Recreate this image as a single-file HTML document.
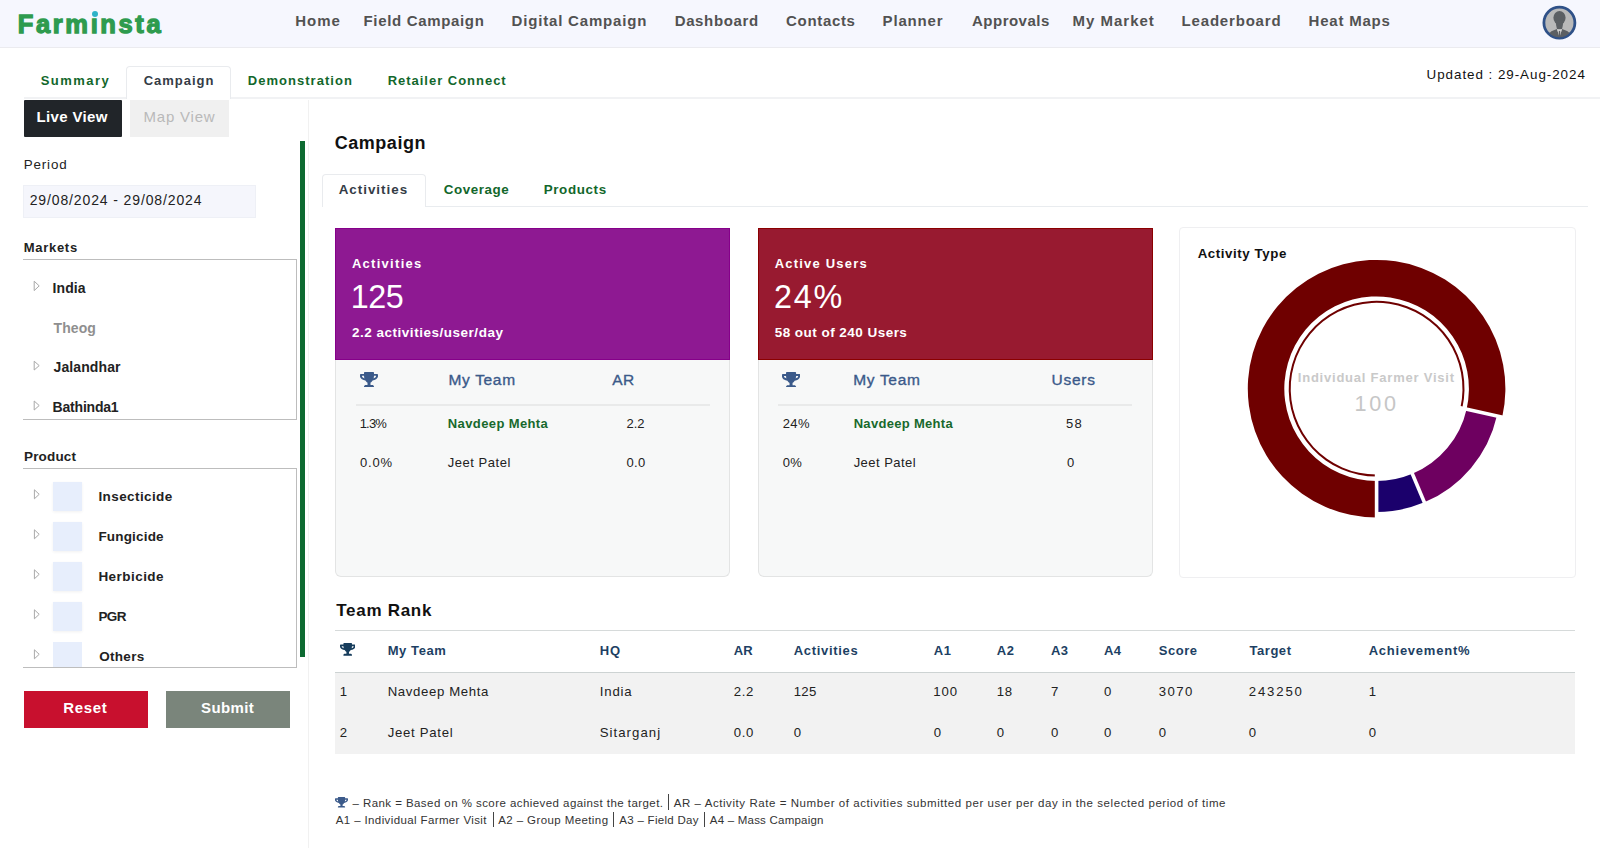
<!DOCTYPE html>
<html><head><meta charset="utf-8">
<style>
html,body{margin:0;padding:0;}
body{width:1600px;height:848px;overflow:hidden;position:relative;background:#fff;font-family:"Liberation Sans",sans-serif;}
.abs{position:absolute;display:block;}
.t{position:absolute;white-space:nowrap;line-height:1;}
.box{position:absolute;box-sizing:border-box;}
</style></head><body>
<!-- header -->
<div class="box" style="left:0;top:0;width:1600px;height:48px;background:#f6f7fe;border-bottom:1px solid #ebebef"></div>
<svg class="abs" style="left:1540px;top:4px" width="38" height="38" viewBox="0 0 38 38">
  <defs><clipPath id="av"><circle cx="19.4" cy="18.65" r="14.6"/></clipPath></defs>
  <circle cx="19.4" cy="18.65" r="15.5" fill="#b9b9b9" stroke="#2f5188" stroke-width="2.8"/>
  <g clip-path="url(#av)" fill="#5b5f63">
    <ellipse cx="19.5" cy="13.8" rx="6.1" ry="6.9"/>
    <path d="M15.6 16.5 Q16.2 22.8 17 24.9 L22 24.9 Q22.8 22.8 23.4 16.5 Z"/>
    <path d="M6.5 37 Q7.5 28 13.8 26.2 L17 24.9 L19.5 33.5 L22 24.9 L25.2 26.2 Q31.5 28 32.5 37 Z"/>
    <path d="M17 24.9 L19.5 26.4 L22 24.9 L19.5 33.5 Z" fill="#d4d4d4"/>
    <path d="M18.9 26.9 L20.1 26.9 L20.7 33.5 L18.3 33.5 Z"/>
  </g>
</svg>
<!-- tab row -->
<div class="box" style="left:24px;top:97px;width:1576px;height:2px;background:#f1f2f4"></div>
<div class="box" style="left:126px;top:66px;width:105px;height:33px;background:#fff;border:1px solid #e9ebee;border-bottom:none;border-radius:4px 4px 0 0"></div>
<!-- sidebar -->
<div class="box" style="left:308px;top:100px;width:1px;height:748px;background:#f1f1f1"></div>
<div class="box" style="left:24px;top:100px;width:98px;height:37px;background:#212529;border-radius:1px"></div>
<div class="box" style="left:130px;top:100px;width:99px;height:37px;background:#f0f0f0"></div>
<div class="box" style="left:300px;top:141px;width:5px;height:516px;background:#0d6a31"></div>
<div class="box" style="left:23px;top:185px;width:233px;height:33px;background:#f5f6fc;border:1px solid #eef0f6"></div>
<div class="box" style="left:23px;top:259px;width:274px;height:161px;border-top:1px solid #bdbdbd;border-right:1px solid #bdbdbd;border-bottom:1px solid #bdbdbd"></div>
<div class="box" style="left:23px;top:468px;width:274px;height:200px;border-top:1px solid #bdbdbd;border-right:1px solid #bdbdbd;border-bottom:1px solid #bdbdbd"></div>
<svg class="abs" style="left:0;top:0" width="300" height="700">
  <g fill="none" stroke="#a9a9a9" stroke-width="1">
    <path d="M34.2 281.2 L39.2 285.9 L34.2 290.6 Z"/>
    <path d="M34.2 361.2 L39.2 365.6 L34.2 370 Z"/>
    <path d="M34.2 401 L39.2 405.5 L34.2 410 Z"/>
    <path d="M34.4 489.8 L39.2 494.3 L34.4 498.8 Z"/>
    <path d="M34.4 529.8 L39.2 534.3 L34.4 538.8 Z"/>
    <path d="M34.4 569.8 L39.2 574.3 L34.4 578.8 Z"/>
    <path d="M34.4 609.8 L39.2 614.3 L34.4 618.8 Z"/>
    <path d="M34.4 649.8 L39.2 654.3 L34.4 658.8 Z"/>
  </g>
</svg>
<div class="box" style="left:53px;top:482px;width:29px;height:29px;background:#e7eefc;box-shadow:0 1px 3px rgba(0,0,0,.06)"></div>
<div class="box" style="left:53px;top:522px;width:29px;height:29px;background:#e7eefc;box-shadow:0 1px 3px rgba(0,0,0,.06)"></div>
<div class="box" style="left:53px;top:562px;width:29px;height:29px;background:#e7eefc;box-shadow:0 1px 3px rgba(0,0,0,.06)"></div>
<div class="box" style="left:53px;top:602px;width:29px;height:29px;background:#e7eefc;box-shadow:0 1px 3px rgba(0,0,0,.06)"></div>
<div class="box" style="left:53px;top:642px;width:29px;height:25px;background:#e7eefc;"></div>
<div class="box" style="left:24px;top:691px;width:124px;height:37px;background:#c8102e"></div>
<div class="box" style="left:166px;top:691px;width:124px;height:37px;background:#7a857b"></div>
<!-- main tabs -->
<div class="box" style="left:322px;top:206px;width:1266px;height:1px;background:#e9ecef"></div>
<div class="box" style="left:322px;top:174px;width:104px;height:33px;background:#fff;border:1px solid #e9ebee;border-bottom:none;border-radius:4px 4px 0 0"></div>
<!-- cards -->
<div class="box" style="left:335px;top:228px;width:395px;height:349px;background:#f7f8f8;border:1px solid #e3e4e4;border-top:none;border-radius:0 0 6px 6px"></div>
<div class="box" style="left:335px;top:228px;width:395px;height:132px;background:#8e1992;border:1px solid #86008a"></div>
<div class="box" style="left:356px;top:404px;width:354px;height:2px;background:#e9eaea"></div>
<div class="box" style="left:758px;top:228px;width:395px;height:349px;background:#f7f8f8;border:1px solid #e3e4e4;border-top:none;border-radius:0 0 6px 6px"></div>
<div class="box" style="left:758px;top:228px;width:395px;height:132px;background:#981a30;border:1px solid #8b0000"></div>
<div class="box" style="left:778px;top:404px;width:354px;height:2px;background:#e9eaea"></div>
<div class="box" style="left:1179px;top:227px;width:397px;height:351px;background:#fff;border:1px solid #efeff1;border-radius:4px"></div>
<svg class="abs" style="left:0;top:0" width="1600" height="848">
<path d="M1376.60,517.50 A128.8,128.8 0 1 1 1502.20,417.24 L1466.61,409.15 A92.3,92.3 0 1 0 1376.60,481.00 Z" fill="#6f0000"/>
<path d="M1496.84,416.02 A123.3,123.3 0 0 1 1424.38,502.37 L1412.37,473.79 A92.3,92.3 0 0 0 1466.61,409.15 Z" fill="#6e0060"/>
<path d="M1424.38,502.37 A123.3,123.3 0 0 1 1376.60,512.00 L1376.60,481.00 A92.3,92.3 0 0 0 1412.37,473.79 Z" fill="#1b006c"/>
<path d="M1376.60,476.60 A87.9,87.9 0 1 1 1462.32,408.17 L1460.37,407.73 A85.9,85.9 0 1 0 1376.60,474.60 Z" fill="#6f0000"/>
<line x1="1376.60" y1="468.70" x2="1376.60" y2="523.70" stroke="#fff" stroke-width="3.6"/><line x1="1454.61" y1="406.42" x2="1508.25" y2="418.61" stroke="#fff" stroke-width="3.6"/><line x1="1407.60" y1="462.45" x2="1428.91" y2="513.15" stroke="#fff" stroke-width="3.6"/>
</svg>
<!-- team rank -->
<div class="box" style="left:335px;top:630px;width:1240px;height:1px;background:#d6dada"></div>
<div class="box" style="left:335px;top:672px;width:1240px;height:82px;background:#f2f2f2;border-top:1px solid #cdd3d3"></div>
<svg class="abs" style="left:360px;top:372px" width="18.0" height="15.4" viewBox="0 0 576 512" preserveAspectRatio="none"><path d="M552 64H448V24c0-13.3-10.7-24-24-24H152c-13.3 0-24 10.7-24 24v40H24C10.7 64 0 74.7 0 88v56c0 35.7 22.5 72.4 61.9 100.7 31.5 22.7 69.8 37.1 110 41.7C203.3 338.5 240 360 240 360v72h-48c-35.3 0-64 20.7-64 56v12c0 6.6 5.4 12 12 12h296c6.6 0 12-5.4 12-12v-12c0-35.3-28.7-56-64-56h-48v-72s36.7-21.5 68.1-73.6c40.3-4.6 78.6-19 110-41.7 39.3-28.3 61.9-65 61.9-100.7V88c0-13.3-10.7-24-24-24zM99.3 192.8C74.9 175.2 64 155.6 64 144v-16h64.2c1 32.6 5.8 61.2 12.8 86.2-15.1-5.2-29.2-12.4-41.7-21.4zM512 144c0 16.1-17.7 36.1-35.3 48.8-12.5 9-26.7 16.2-41.8 21.4 7-25 11.8-53.6 12.8-86.2H512v16z" fill="#3b5a8a"/></svg>
<svg class="abs" style="left:782.3px;top:371.8px" width="18.1" height="15.6" viewBox="0 0 576 512" preserveAspectRatio="none"><path d="M552 64H448V24c0-13.3-10.7-24-24-24H152c-13.3 0-24 10.7-24 24v40H24C10.7 64 0 74.7 0 88v56c0 35.7 22.5 72.4 61.9 100.7 31.5 22.7 69.8 37.1 110 41.7C203.3 338.5 240 360 240 360v72h-48c-35.3 0-64 20.7-64 56v12c0 6.6 5.4 12 12 12h296c6.6 0 12-5.4 12-12v-12c0-35.3-28.7-56-64-56h-48v-72s36.7-21.5 68.1-73.6c40.3-4.6 78.6-19 110-41.7 39.3-28.3 61.9-65 61.9-100.7V88c0-13.3-10.7-24-24-24zM99.3 192.8C74.9 175.2 64 155.6 64 144v-16h64.2c1 32.6 5.8 61.2 12.8 86.2-15.1-5.2-29.2-12.4-41.7-21.4zM512 144c0 16.1-17.7 36.1-35.3 48.8-12.5 9-26.7 16.2-41.8 21.4 7-25 11.8-53.6 12.8-86.2H512v16z" fill="#3b5a8a"/></svg>
<svg class="abs" style="left:339.6px;top:643px" width="15.4" height="12.7" viewBox="0 0 576 512" preserveAspectRatio="none"><path d="M552 64H448V24c0-13.3-10.7-24-24-24H152c-13.3 0-24 10.7-24 24v40H24C10.7 64 0 74.7 0 88v56c0 35.7 22.5 72.4 61.9 100.7 31.5 22.7 69.8 37.1 110 41.7C203.3 338.5 240 360 240 360v72h-48c-35.3 0-64 20.7-64 56v12c0 6.6 5.4 12 12 12h296c6.6 0 12-5.4 12-12v-12c0-35.3-28.7-56-64-56h-48v-72s36.7-21.5 68.1-73.6c40.3-4.6 78.6-19 110-41.7 39.3-28.3 61.9-65 61.9-100.7V88c0-13.3-10.7-24-24-24zM99.3 192.8C74.9 175.2 64 155.6 64 144v-16h64.2c1 32.6 5.8 61.2 12.8 86.2-15.1-5.2-29.2-12.4-41.7-21.4zM512 144c0 16.1-17.7 36.1-35.3 48.8-12.5 9-26.7 16.2-41.8 21.4 7-25 11.8-53.6 12.8-86.2H512v16z" fill="#173d5c"/></svg>
<svg class="abs" style="left:335px;top:797px" width="13.0" height="10.6" viewBox="0 0 576 512" preserveAspectRatio="none"><path d="M552 64H448V24c0-13.3-10.7-24-24-24H152c-13.3 0-24 10.7-24 24v40H24C10.7 64 0 74.7 0 88v56c0 35.7 22.5 72.4 61.9 100.7 31.5 22.7 69.8 37.1 110 41.7C203.3 338.5 240 360 240 360v72h-48c-35.3 0-64 20.7-64 56v12c0 6.6 5.4 12 12 12h296c6.6 0 12-5.4 12-12v-12c0-35.3-28.7-56-64-56h-48v-72s36.7-21.5 68.1-73.6c40.3-4.6 78.6-19 110-41.7 39.3-28.3 61.9-65 61.9-100.7V88c0-13.3-10.7-24-24-24zM99.3 192.8C74.9 175.2 64 155.6 64 144v-16h64.2c1 32.6 5.8 61.2 12.8 86.2-15.1-5.2-29.2-12.4-41.7-21.4zM512 144c0 16.1-17.7 36.1-35.3 48.8-12.5 9-26.7 16.2-41.8 21.4 7-25 11.8-53.6 12.8-86.2H512v16z" fill="#3b5a8a"/></svg>
<!-- footer bars -->
<div class="box" style="left:668px;top:794px;width:1px;height:16px;background:#444"></div>
<div class="box" style="left:493px;top:812px;width:1px;height:15px;background:#444"></div>
<div class="box" style="left:613px;top:812px;width:1px;height:15px;background:#444"></div>
<div class="box" style="left:704px;top:812px;width:1px;height:15px;background:#444"></div>
<div id="t0" class="t" style="left:295.35px;top:12.90px;font-size:15px;font-weight:bold;color:#525252;letter-spacing:0.938px;">Home</div>
<div id="t1" class="t" style="left:363.50px;top:12.90px;font-size:15px;font-weight:bold;color:#525252;letter-spacing:0.666px;">Field Campaign</div>
<div id="t2" class="t" style="left:511.60px;top:12.90px;font-size:15px;font-weight:bold;color:#525252;letter-spacing:0.816px;">Digital Campaign</div>
<div id="t3" class="t" style="left:674.66px;top:12.90px;font-size:15px;font-weight:bold;color:#525252;letter-spacing:0.643px;">Dashboard</div>
<div id="t4" class="t" style="left:786.11px;top:12.90px;font-size:15px;font-weight:bold;color:#525252;letter-spacing:0.666px;">Contacts</div>
<div id="t5" class="t" style="left:882.60px;top:12.90px;font-size:15px;font-weight:bold;color:#525252;letter-spacing:0.838px;">Planner</div>
<div id="t6" class="t" style="left:972.02px;top:12.90px;font-size:15px;font-weight:bold;color:#525252;letter-spacing:0.485px;">Approvals</div>
<div id="t7" class="t" style="left:1072.60px;top:12.90px;font-size:15px;font-weight:bold;color:#525252;letter-spacing:0.980px;">My Market</div>
<div id="t8" class="t" style="left:1181.60px;top:12.90px;font-size:15px;font-weight:bold;color:#525252;letter-spacing:0.814px;">Leaderboard</div>
<div id="t9" class="t" style="left:1308.60px;top:12.90px;font-size:15px;font-weight:bold;color:#525252;letter-spacing:0.784px;">Heat Maps</div>
<div id="t10" class="t" style="left:17.85px;top:12.41px;font-size:25.5px;font-weight:bold;color:#2e9b4e;letter-spacing:2.609px;-webkit-text-stroke:1.3px #2e9b4e">Farmınsta</div>
<div id="t11" class="t" style="left:40.66px;top:74.40px;font-size:13px;font-weight:bold;color:#12672b;letter-spacing:1.458px;">Summary</div>
<div id="t12" class="t" style="left:143.66px;top:74.40px;font-size:13px;font-weight:bold;color:#343c46;letter-spacing:0.988px;">Campaign</div>
<div id="t13" class="t" style="left:247.85px;top:74.40px;font-size:13px;font-weight:bold;color:#12672b;letter-spacing:1.022px;">Demonstration</div>
<div id="t14" class="t" style="left:387.66px;top:74.40px;font-size:13px;font-weight:bold;color:#12672b;letter-spacing:0.983px;">Retailer Connect</div>
<div id="t15" class="t" style="left:1426.60px;top:67.66px;font-size:13.4px;font-weight:normal;color:#111;letter-spacing:0.952px;">Updated : 29-Aug-2024</div>
<div id="t16" class="t" style="left:36.60px;top:109.30px;font-size:15px;font-weight:bold;color:#fff;letter-spacing:0.326px;">Live View</div>
<div id="t17" class="t" style="left:143.60px;top:109.30px;font-size:15px;font-weight:normal;color:#b9b9b9;letter-spacing:0.772px;">Map View</div>
<div id="t18" class="t" style="left:23.66px;top:157.66px;font-size:13.4px;font-weight:normal;color:#222;letter-spacing:0.856px;">Period</div>
<div id="t19" class="t" style="left:29.66px;top:193.15px;font-size:14px;font-weight:normal;color:#222;letter-spacing:0.877px;">29/08/2024 - 29/08/2024</div>
<div id="t20" class="t" style="left:23.66px;top:241.40px;font-size:13px;font-weight:bold;color:#222;letter-spacing:0.727px;">Markets</div>
<div id="t21" class="t" style="left:52.60px;top:280.85px;font-size:14px;font-weight:bold;color:#222;letter-spacing:0.052px;">India</div>
<div id="t22" class="t" style="left:53.56px;top:320.75px;font-size:14px;font-weight:bold;color:#8f8f8f;letter-spacing:0.075px;">Theog</div>
<div id="t23" class="t" style="left:53.56px;top:360.35px;font-size:14px;font-weight:bold;color:#222;letter-spacing:0.105px;">Jalandhar</div>
<div id="t24" class="t" style="left:52.60px;top:399.85px;font-size:14px;font-weight:bold;color:#222;letter-spacing:-0.203px;">Bathinda1</div>
<div id="t25" class="t" style="left:24.02px;top:449.77px;font-size:13.5px;font-weight:bold;color:#222;letter-spacing:0.161px;">Product</div>
<div id="t26" class="t" style="left:98.40px;top:489.87px;font-size:13.5px;font-weight:bold;color:#222;letter-spacing:0.412px;">Insecticide</div>
<div id="t27" class="t" style="left:98.40px;top:529.87px;font-size:13.5px;font-weight:bold;color:#222;letter-spacing:0.181px;">Fungicide</div>
<div id="t28" class="t" style="left:98.40px;top:569.87px;font-size:13.5px;font-weight:bold;color:#222;letter-spacing:0.459px;">Herbicide</div>
<div id="t29" class="t" style="left:98.40px;top:609.87px;font-size:13.5px;font-weight:bold;color:#222;letter-spacing:-0.533px;">PGR</div>
<div id="t30" class="t" style="left:99.20px;top:649.87px;font-size:13.5px;font-weight:bold;color:#222;letter-spacing:0.309px;">Others</div>
<div id="t31" class="t" style="left:63.30px;top:700.22px;font-size:15px;font-weight:bold;color:#fff;letter-spacing:0.660px;">Reset</div>
<div id="t32" class="t" style="left:201.02px;top:700.22px;font-size:15px;font-weight:bold;color:#fff;letter-spacing:0.391px;">Submit</div>
<div id="t33" class="t" style="left:334.70px;top:134.36px;font-size:18px;font-weight:bold;color:#111;letter-spacing:0.541px;">Campaign</div>
<div id="t34" class="t" style="left:338.70px;top:182.66px;font-size:13.4px;font-weight:bold;color:#343c46;letter-spacing:0.984px;">Activities</div>
<div id="t35" class="t" style="left:443.66px;top:182.66px;font-size:13.4px;font-weight:bold;color:#12672b;letter-spacing:0.567px;">Coverage</div>
<div id="t36" class="t" style="left:543.70px;top:182.66px;font-size:13.4px;font-weight:bold;color:#12672b;letter-spacing:0.622px;">Products</div>
<div id="t37" class="t" style="left:351.90px;top:256.60px;font-size:13px;font-weight:bold;color:#fff;letter-spacing:1.287px;">Activities</div>
<div id="t38" class="t" style="left:350.70px;top:280.92px;font-size:32.3px;font-weight:normal;color:#fff;letter-spacing:-0.445px;">125</div>
<div id="t39" class="t" style="left:351.90px;top:325.57px;font-size:13.5px;font-weight:bold;color:#fff;letter-spacing:0.521px;">2.2 activities/user/day</div>
<div id="t40" class="t" style="left:448.40px;top:372.38px;font-size:15.5px;font-weight:normal;color:#3b5a8a;letter-spacing:0.684px;-webkit-text-stroke:0.35px #3b5a8a">My Team</div>
<div id="t41" class="t" style="left:612.20px;top:371.54px;font-size:15.5px;font-weight:normal;color:#3b5a8a;letter-spacing:0.453px;-webkit-text-stroke:0.35px #3b5a8a">AR</div>
<div id="t42" class="t" style="left:359.66px;top:417.00px;font-size:13px;font-weight:normal;color:#222;letter-spacing:-0.800px;">1.3%</div>
<div id="t43" class="t" style="left:447.85px;top:417.00px;font-size:13px;font-weight:bold;color:#17692c;letter-spacing:0.383px;">Navdeep Mehta</div>
<div id="t44" class="t" style="left:626.56px;top:416.50px;font-size:13px;font-weight:normal;color:#222;letter-spacing:-0.049px;">2.2</div>
<div id="t45" class="t" style="left:360.02px;top:456.00px;font-size:13px;font-weight:normal;color:#222;letter-spacing:0.820px;">0.0%</div>
<div id="t46" class="t" style="left:447.85px;top:456.00px;font-size:13px;font-weight:normal;color:#222;letter-spacing:0.514px;">Jeet Patel</div>
<div id="t47" class="t" style="left:626.56px;top:456.00px;font-size:13px;font-weight:normal;color:#222;letter-spacing:0.311px;">0.0</div>
<div id="t48" class="t" style="left:774.66px;top:257.00px;font-size:13px;font-weight:bold;color:#fff;letter-spacing:1.202px;">Active Users</div>
<div id="t49" class="t" style="left:774.10px;top:280.92px;font-size:32.3px;font-weight:normal;color:#fff;letter-spacing:1.732px;">24%</div>
<div id="t50" class="t" style="left:774.66px;top:325.87px;font-size:13.5px;font-weight:bold;color:#fff;letter-spacing:0.468px;">58 out of 240 Users</div>
<div id="t51" class="t" style="left:853.20px;top:372.38px;font-size:15.5px;font-weight:normal;color:#3b5a8a;letter-spacing:0.684px;-webkit-text-stroke:0.35px #3b5a8a">My Team</div>
<div id="t52" class="t" style="left:1051.40px;top:372.38px;font-size:15.5px;font-weight:normal;color:#3b5a8a;letter-spacing:0.804px;-webkit-text-stroke:0.35px #3b5a8a">Users</div>
<div id="t53" class="t" style="left:782.66px;top:417.00px;font-size:13px;font-weight:normal;color:#222;letter-spacing:0.484px;">24%</div>
<div id="t54" class="t" style="left:853.66px;top:417.00px;font-size:13px;font-weight:bold;color:#17692c;letter-spacing:0.307px;">Navdeep Mehta</div>
<div id="t55" class="t" style="left:1066.02px;top:417.00px;font-size:13px;font-weight:normal;color:#222;letter-spacing:1.251px;">58</div>
<div id="t56" class="t" style="left:782.66px;top:456.00px;font-size:13px;font-weight:normal;color:#222;letter-spacing:0.443px;">0%</div>
<div id="t57" class="t" style="left:853.66px;top:456.00px;font-size:13px;font-weight:normal;color:#222;letter-spacing:0.466px;">Jeet Patel</div>
<div id="t58" class="t" style="left:1066.90px;top:456.00px;font-size:13px;font-weight:normal;color:#222;letter-spacing:0.600px;">0</div>
<div id="t59" class="t" style="left:1197.66px;top:246.74px;font-size:13.3px;font-weight:bold;color:#111;letter-spacing:0.577px;">Activity Type</div>
<div id="t60" class="t" style="left:1297.80px;top:371.00px;font-size:13px;font-weight:bold;color:#c9c9c9;letter-spacing:0.774px;">Individual Farmer Visit</div>
<div id="t61" class="t" style="left:1354.42px;top:392.98px;font-size:21.6px;font-weight:normal;color:#c6c6c6;letter-spacing:2.804px;">100</div>
<div id="t62" class="t" style="left:336.22px;top:601.61px;font-size:17px;font-weight:bold;color:#111;letter-spacing:0.713px;">Team Rank</div>
<div id="t63" class="t" style="left:387.66px;top:643.60px;font-size:13px;font-weight:bold;color:#1d3f63;letter-spacing:0.595px;">My Team</div>
<div id="t64" class="t" style="left:599.70px;top:643.60px;font-size:13px;font-weight:bold;color:#1d3f63;letter-spacing:0.900px;">HQ</div>
<div id="t65" class="t" style="left:733.66px;top:643.60px;font-size:13px;font-weight:bold;color:#1d3f63;letter-spacing:0.219px;">AR</div>
<div id="t66" class="t" style="left:793.66px;top:643.60px;font-size:13px;font-weight:bold;color:#1d3f63;letter-spacing:0.688px;">Activities</div>
<div id="t67" class="t" style="left:933.84px;top:643.60px;font-size:13px;font-weight:bold;color:#1d3f63;letter-spacing:0.550px;">A1</div>
<div id="t68" class="t" style="left:996.70px;top:643.60px;font-size:13px;font-weight:bold;color:#1d3f63;letter-spacing:0.550px;">A2</div>
<div id="t69" class="t" style="left:1050.90px;top:643.60px;font-size:13px;font-weight:bold;color:#1d3f63;letter-spacing:0.550px;">A3</div>
<div id="t70" class="t" style="left:1103.90px;top:643.60px;font-size:13px;font-weight:bold;color:#1d3f63;letter-spacing:0.550px;">A4</div>
<div id="t71" class="t" style="left:1158.66px;top:643.60px;font-size:13px;font-weight:bold;color:#1d3f63;letter-spacing:0.550px;">Score</div>
<div id="t72" class="t" style="left:1249.48px;top:643.60px;font-size:13px;font-weight:bold;color:#1d3f63;letter-spacing:0.550px;">Target</div>
<div id="t73" class="t" style="left:1368.66px;top:643.60px;font-size:13px;font-weight:bold;color:#1d3f63;letter-spacing:0.763px;">Achievement%</div>
<div id="t74" class="t" style="left:339.66px;top:685.03px;font-size:13.2px;font-weight:normal;color:#222;letter-spacing:0.700px;">1</div>
<div id="t75" class="t" style="left:387.66px;top:685.03px;font-size:13.2px;font-weight:normal;color:#222;letter-spacing:0.641px;">Navdeep Mehta</div>
<div id="t76" class="t" style="left:599.70px;top:685.03px;font-size:13.2px;font-weight:normal;color:#222;letter-spacing:0.848px;">India</div>
<div id="t77" class="t" style="left:733.66px;top:685.03px;font-size:13.2px;font-weight:normal;color:#222;letter-spacing:0.700px;">2.2</div>
<div id="t78" class="t" style="left:793.66px;top:685.03px;font-size:13.2px;font-weight:normal;color:#222;letter-spacing:0.292px;">125</div>
<div id="t79" class="t" style="left:933.20px;top:685.03px;font-size:13.2px;font-weight:normal;color:#222;letter-spacing:0.892px;">100</div>
<div id="t80" class="t" style="left:996.70px;top:685.03px;font-size:13.2px;font-weight:normal;color:#222;letter-spacing:0.700px;">18</div>
<div id="t81" class="t" style="left:1050.90px;top:685.03px;font-size:13.2px;font-weight:normal;color:#222;letter-spacing:0.700px;">7</div>
<div id="t82" class="t" style="left:1103.90px;top:685.03px;font-size:13.2px;font-weight:normal;color:#222;letter-spacing:0.700px;">0</div>
<div id="t83" class="t" style="left:1158.66px;top:685.03px;font-size:13.2px;font-weight:normal;color:#222;letter-spacing:1.452px;">3070</div>
<div id="t84" class="t" style="left:1248.84px;top:685.03px;font-size:13.2px;font-weight:normal;color:#222;letter-spacing:1.809px;">243250</div>
<div id="t85" class="t" style="left:1368.66px;top:685.03px;font-size:13.2px;font-weight:normal;color:#222;letter-spacing:0.700px;">1</div>
<div id="t86" class="t" style="left:339.66px;top:726.03px;font-size:13.2px;font-weight:normal;color:#222;letter-spacing:0.700px;">2</div>
<div id="t87" class="t" style="left:387.66px;top:726.03px;font-size:13.2px;font-weight:normal;color:#222;letter-spacing:0.700px;">Jeet Patel</div>
<div id="t88" class="t" style="left:599.70px;top:726.03px;font-size:13.2px;font-weight:normal;color:#222;letter-spacing:1.042px;">Sitarganj</div>
<div id="t89" class="t" style="left:733.66px;top:726.03px;font-size:13.2px;font-weight:normal;color:#222;letter-spacing:0.700px;">0.0</div>
<div id="t90" class="t" style="left:793.66px;top:726.03px;font-size:13.2px;font-weight:normal;color:#222;letter-spacing:0.700px;">0</div>
<div id="t91" class="t" style="left:933.84px;top:726.03px;font-size:13.2px;font-weight:normal;color:#222;letter-spacing:0.700px;">0</div>
<div id="t92" class="t" style="left:996.70px;top:726.03px;font-size:13.2px;font-weight:normal;color:#222;letter-spacing:0.700px;">0</div>
<div id="t93" class="t" style="left:1050.90px;top:726.03px;font-size:13.2px;font-weight:normal;color:#222;letter-spacing:0.700px;">0</div>
<div id="t94" class="t" style="left:1103.90px;top:726.03px;font-size:13.2px;font-weight:normal;color:#222;letter-spacing:0.700px;">0</div>
<div id="t95" class="t" style="left:1158.66px;top:726.03px;font-size:13.2px;font-weight:normal;color:#222;letter-spacing:0.700px;">0</div>
<div id="t96" class="t" style="left:1248.84px;top:726.03px;font-size:13.2px;font-weight:normal;color:#222;letter-spacing:0.700px;">0</div>
<div id="t97" class="t" style="left:1368.66px;top:726.03px;font-size:13.2px;font-weight:normal;color:#222;letter-spacing:0.700px;">0</div>
<div id="t98" class="t" style="left:352.46px;top:797.83px;font-size:11.5px;font-weight:normal;color:#333;letter-spacing:0.437px;">– Rank = Based on % score achieved against the target.</div>
<div id="t99" class="t" style="left:673.74px;top:797.83px;font-size:11.5px;font-weight:normal;color:#333;letter-spacing:0.565px;">AR – Activity Rate = Number of activities submitted per user per day in the selected period of time</div>
<div id="t100" class="t" style="left:335.74px;top:814.83px;font-size:11.5px;font-weight:normal;color:#333;letter-spacing:0.382px;">A1 – Individual Farmer Visit</div>
<div id="t101" class="t" style="left:498.22px;top:814.83px;font-size:11.5px;font-weight:normal;color:#333;letter-spacing:0.405px;">A2 – Group Meeting</div>
<div id="t102" class="t" style="left:619.22px;top:814.83px;font-size:11.5px;font-weight:normal;color:#333;letter-spacing:0.302px;">A3 – Field Day</div>
<div id="t103" class="t" style="left:709.74px;top:814.83px;font-size:11.5px;font-weight:normal;color:#333;letter-spacing:0.226px;">A4 – Mass Campaign</div>
<div class="abs" style="left:92.2px;top:11px;width:6.2px;height:6.2px;border-radius:50%;background:#2eb2c8"></div>
</body></html>
